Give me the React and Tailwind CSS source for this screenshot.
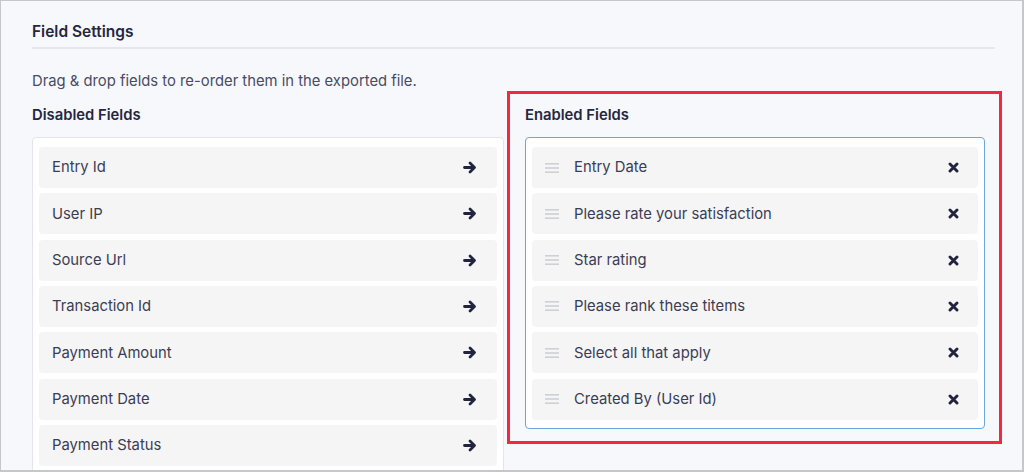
import React from 'react';

const DISABLED = ['Entry Id', 'User IP', 'Source Url', 'Transaction Id', 'Payment Amount', 'Payment Date', 'Payment Status'];
const ENABLED = ['Entry Date', 'Please rate your satisfaction', 'Star rating', 'Please rank these titems', 'Select all that apply', 'Created By (User Id)'];

const Handle = () => (
  <svg width="14" height="12" viewBox="0 0 14 12" className="shrink-0">
    <rect x="0" y="1" width="14" height="1.6" fill="#cfd0d6" />
    <rect x="0" y="5.2" width="14" height="1.6" fill="#cfd0d6" />
    <rect x="0" y="9.4" width="14" height="1.6" fill="#cfd0d6" />
  </svg>
);

const Arrow = () => (
  <svg width="14" height="13" viewBox="0 0 14 13" className="shrink-0">
    <path d="M1.5 6.5 H11 M7 2 L11.5 6.5 L7 11" fill="none" stroke="#22243f" strokeWidth="2.8" strokeLinecap="round" strokeLinejoin="round" />
  </svg>
);

const Cross = () => (
  <svg width="11" height="11" viewBox="0 0 11 11" className="shrink-0">
    <path d="M2 2 L9 9 M9 2 L2 9" fill="none" stroke="#22243f" strokeWidth="2.9" strokeLinecap="round" />
  </svg>
);

export default function App() {
  return (
    <div className="h-[472px] w-[1024px] overflow-hidden border-t border-l border-b-2 border-r-2 border-[#c6c7cb] bg-[#f7f8fc] font-['Inter',sans-serif] text-[#2a2c45]">
      <div className="pl-[31px] pr-[27px] pt-[20px]">
        <h2 className="text-[15.5px] font-semibold leading-[22px] text-[#25273f]">Field Settings</h2>
        <div className="mt-[4px] h-[2px] bg-[#e6e7ec]" />
        <p className="mt-[22px] text-[14.8px] leading-[20px] text-[#494c63]">Drag &amp; drop fields to re-order them in the exported file.</p>

        <div className="mt-[1px] flex items-start">
          {/* disabled */}
          <div className="w-[472px] shrink-0">
            <h3 className="pt-[13px] text-[14.8px] font-semibold leading-[20px] text-[#25273f]">Disabled Fields</h3>
            <div className="mt-[12px] h-[360px] rounded-[4px] border border-[#e4e5ea] bg-white px-[6px] pt-[9px]">
              <div className="flex flex-col gap-[5.33px]">
                {DISABLED.map((f) => (
                  <div key={f} className="flex h-[41px] items-center justify-between rounded-[4px] bg-[#f5f5f6] pl-[13px] pr-[20px]">
                    <span className="text-[14.8px] text-[#3a3d55]">{f}</span>
                    <Arrow />
                  </div>
                ))}
              </div>
            </div>
          </div>

          {/* enabled, with red annotation */}
          <div className="-mt-[1px] ml-[3px] w-[495px] shrink-0 border-[3px] border-[#f3273d] pb-[12px] pl-[15px] pr-[14px] pt-[11px]">
            <h3 className="text-[14.8px] font-semibold leading-[20px] text-[#25273f]">Enabled Fields</h3>
            <div className="mt-[12px] rounded-[4px] border border-[#6aa7d8] bg-white px-[6px] pb-[8px] pt-[9px]">
              <div className="flex flex-col gap-[5.33px]">
                {ENABLED.map((f) => (
                  <div key={f} className="flex h-[41px] items-center rounded-[4px] bg-[#f5f5f6] pl-[13px] pr-[19px]">
                    <Handle />
                    <span className="ml-[15px] flex-1 text-[14.8px] text-[#3a3d55]">{f}</span>
                    <Cross />
                  </div>
                ))}
              </div>
            </div>
          </div>
        </div>
      </div>
    </div>
  );
}
